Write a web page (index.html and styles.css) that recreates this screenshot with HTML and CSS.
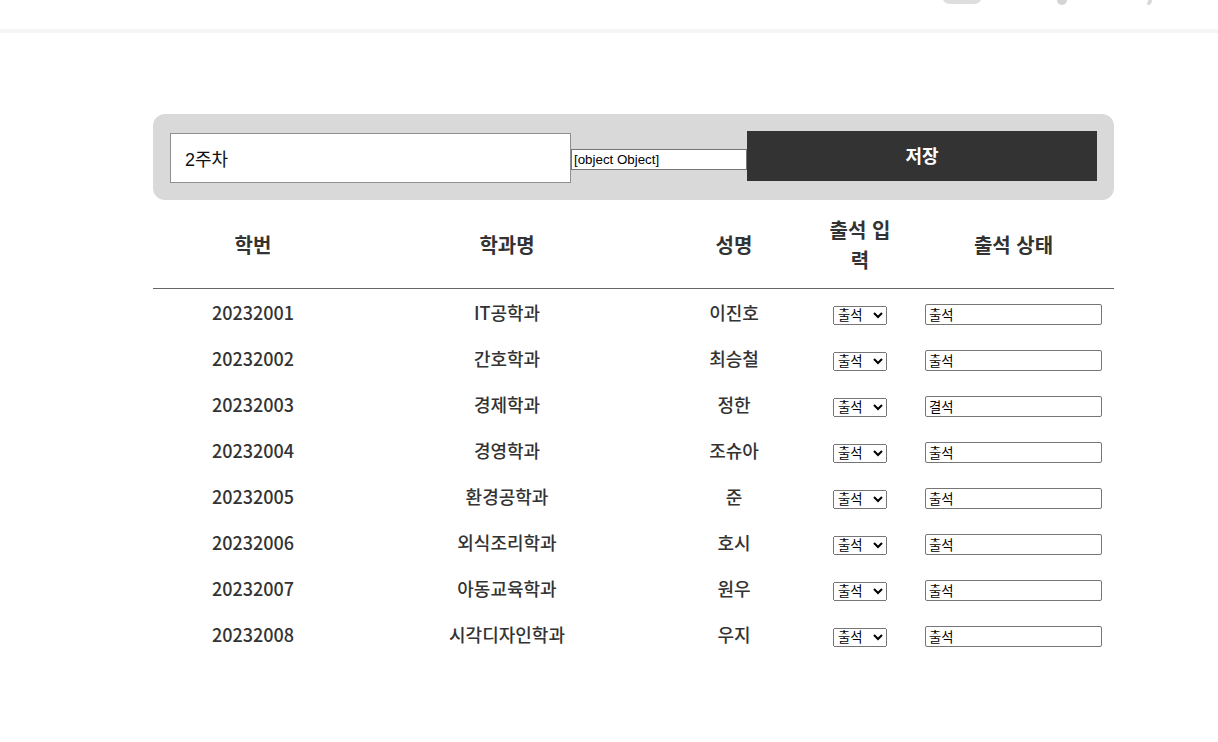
FILE: index.html
```html
<!DOCTYPE html>
<html lang="ko">
<head>
<meta charset="utf-8">
<title>출석 관리</title>
<link rel="stylesheet" href="styles.css">
</head>
<body>
<header class="topbar">
  <span class="top-pill"></span>
  <span class="top-dot"></span>
  <span class="top-tail"></span>
</header>
<main class="wrap">
  <div class="toolbar">
    <input class="week-input" type="text" value="2주차">
    <input class="obj-input" type="text" value="[object Object]">
    <button class="save-btn" type="button">저장</button>
  </div>
  <table class="att">
    <colgroup>
      <col class="c1"><col class="c2"><col class="c3"><col class="c4"><col class="c5">
    </colgroup>
    <thead>
      <tr><th>학번</th><th>학과명</th><th>성명</th><th>출석 입력</th><th>출석 상태</th></tr>
    </thead>
    <tbody>
      <tr><td>20232001</td><td>IT공학과</td><td>이진호</td><td><select class="sel"><option>출석</option><option>결석</option></select></td><td><input class="status" type="text" value="출석"></td></tr>
      <tr><td>20232002</td><td>간호학과</td><td>최승철</td><td><select class="sel"><option>출석</option><option>결석</option></select></td><td><input class="status" type="text" value="출석"></td></tr>
      <tr><td>20232003</td><td>경제학과</td><td>정한</td><td><select class="sel"><option>출석</option><option>결석</option></select></td><td><input class="status" type="text" value="결석"></td></tr>
      <tr><td>20232004</td><td>경영학과</td><td>조슈아</td><td><select class="sel"><option>출석</option><option>결석</option></select></td><td><input class="status" type="text" value="출석"></td></tr>
      <tr><td>20232005</td><td>환경공학과</td><td>준</td><td><select class="sel"><option>출석</option><option>결석</option></select></td><td><input class="status" type="text" value="출석"></td></tr>
      <tr><td>20232006</td><td>외식조리학과</td><td>호시</td><td><select class="sel"><option>출석</option><option>결석</option></select></td><td><input class="status" type="text" value="출석"></td></tr>
      <tr><td>20232007</td><td>아동교육학과</td><td>원우</td><td><select class="sel"><option>출석</option><option>결석</option></select></td><td><input class="status" type="text" value="출석"></td></tr>
      <tr><td>20232008</td><td>시각디자인학과</td><td>우지</td><td><select class="sel"><option>출석</option><option>결석</option></select></td><td><input class="status" type="text" value="출석"></td></tr>
    </tbody>
  </table>
</main>
</body>
</html>
```
FILE: styles.css
```css
html, body {
  margin: 0;
  padding: 0;
  background: #ffffff;
}
body {
  font-family: "Noto Sans CJK KR", "Noto Sans", sans-serif;
  color: #333333;
}
.topbar {
  height: 29px;
  border-bottom: 4px solid #f5f5f5;
  display: flex;
  align-items: flex-start;
  overflow: hidden;
}
.top-pill {
  width: 40px;
  height: 20px;
  margin-top: -16px;
  margin-left: 942px;
  background: #dedede;
  border-radius: 8px;
}
.top-dot {
  width: 10px;
  height: 14px;
  margin-top: -9px;
  margin-left: 75px;
  background: #d4d4d4;
  border-radius: 5px;
}
.top-tail {
  width: 4px;
  height: 8px;
  margin-top: -3px;
  margin-left: 81px;
  background: #d8d8d8;
  border-radius: 0 0 3px 3px;
  transform: skewX(-20deg);
}
.wrap {
  margin: 81px 0 0 153px;
  width: 961px;
}
.toolbar {
  display: flex;
  align-items: flex-start;
  background: #d9d9d9;
  border-radius: 12px;
  padding: 17px 17px;
}
.week-input {
  box-sizing: border-box;
  width: 401px;
  height: 50px;
  margin-top: 2px;
  padding: 0 14px;
  border: 1px solid #8f8f8f;
  background: #fff;
  font-family: "Liberation Sans", "Noto Sans CJK KR", sans-serif;
  font-size: 18px;
  color: #111;
  outline: none;
}
.obj-input {
  box-sizing: border-box;
  width: 176px;
  height: 21px;
  margin-top: 18px;
  padding: 1px 2px;
  border: 1px solid #767676;
  background: #fff;
  font-family: "Liberation Sans", sans-serif;
  font-size: 13.33px;
  color: #000;
}
.save-btn {
  box-sizing: border-box;
  width: 350px;
  height: 50px;
  border: none;
  background: #333333;
  color: #ffffff;
  font-family: "Noto Sans CJK KR", sans-serif;
  font-weight: 700;
  font-size: 18px;
  padding: 0 0 2px;
  cursor: pointer;
}
.att {
  margin-top: 10px;
  width: 961px;
  table-layout: fixed;
  border-collapse: collapse;
}
.c1 { width: 200px; }
.c2 { width: 308px; }
.c3 { width: 146px; }
.c4 { width: 106px; }
.c5 { width: 201px; }
.att th {
  font-size: 20px;
  font-weight: 700;
  line-height: 30px;
  padding: 5px 15px 13px;
  text-align: center;
  vertical-align: middle;
  border-bottom: 1px solid #666666;
  color: #333;
}
.att td {
  font-size: 18px;
  font-weight: 500;
  line-height: 26px;
  height: 44px;
  padding: 1px 0;
  text-align: center;
  vertical-align: middle;
  color: #333;
}
.sel {
  box-sizing: border-box;
  width: 54px;
  height: 19px;
  font-family: "Liberation Sans", "Noto Sans CJK KR", sans-serif;
  font-size: 13.33px;
  color: #000;
  vertical-align: middle;
}
.status {
  box-sizing: border-box;
  width: 177px;
  height: 21px;
  padding: 1px 3px;
  border: 1px solid #767676;
  border-radius: 2px;
  font-family: "Liberation Sans", "Noto Sans CJK KR", sans-serif;
  font-size: 13.33px;
  color: #000;
  vertical-align: middle;
}
```
